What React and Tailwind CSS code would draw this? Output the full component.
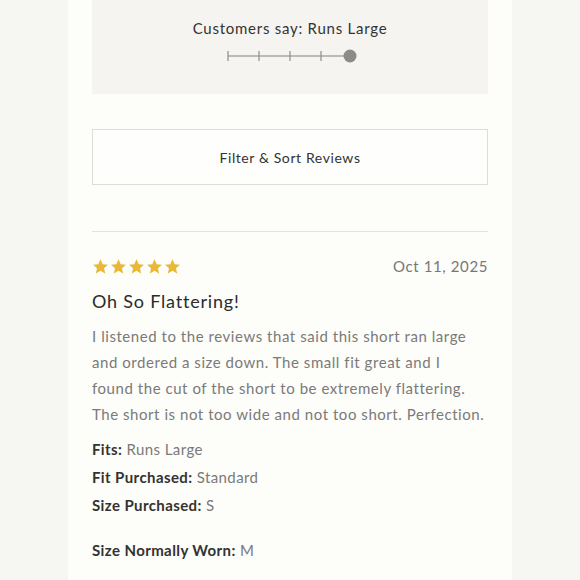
import React from "react";

function Stars() {
  return (
    <div className="flex gap-[1px]">
      {[0, 1, 2, 3, 4].map((i) => (
        <svg key={i} width="17" height="17" viewBox="0 0 24 24">
          <path
            d="M12 1.8l3.1 6.9 7.4.7-5.6 5 1.7 7.4L12 17.9l-6.6 3.9 1.7-7.4-5.6-5 7.4-.7z"
            fill="#e9b934"
          />
        </svg>
      ))}
    </div>
  );
}

function FitScale() {
  return (
    <svg width="140" height="16" viewBox="0 0 140 16">
      <line x1="2" y1="8" x2="128" y2="8" stroke="#a9a7a5" strokeWidth="1.5" />
      {[2, 33, 64, 95].map((x) => (
        <line key={x} x1={x} y1="3" x2={x} y2="13" stroke="#8f8d8b" strokeWidth="1.2" />
      ))}
      <circle cx="124" cy="8" r="6.5" fill="#8d8b8a" />
    </svg>
  );
}

const details = [
  { label: "Fits:", value: "Runs Large" },
  { label: "Fit Purchased:", value: "Standard" },
  { label: "Size Purchased:", value: "S" },
];

const bodyLines = [
  "I listened to the reviews that said this short ran large",
  "and ordered a size down. The small fit great and I",
  "found the cut of the short to be extremely flattering.",
  "The short is not too wide and not too short. Perfection.",
];

function App() {
  return (
    <div
      className="w-[580px] h-[580px] overflow-hidden bg-[#f6f6f2] flex justify-center"
      style={{ fontFamily: "Lato, 'Noto Sans', sans-serif" }}
    >
      <div className="w-[444px] h-full bg-[#fdfdf9] px-6">
        <div className="bg-[#f5f4f1] h-[94px] flex flex-col items-center pt-[17px]">
          <p className="text-[15px] text-[#333] tracking-[0.75px]">Customers say: Runs Large</p>
          <div className="mt-[8px] ml-[12px]">
            <FitScale />
          </div>
        </div>

        <button className="mt-[35px] w-full h-[56px] border border-[#dcdcda] bg-[#fefefc] text-[14px] text-[#333] tracking-[0.6px]">
          Filter &amp; Sort Reviews
        </button>

        <div className="mt-[46px] border-t border-[#e2e2df]" />

        <div className="mt-[23px] flex items-center justify-between">
          <Stars />
          <span className="text-[15px] text-[#777] tracking-[0.6px]">Oct 11, 2025</span>
        </div>

        <h2 className="mt-[10px] text-[18px] text-[#2b2b2b] tracking-[0.8px]">Oh So Flattering!</h2>

        <p className="mt-[8px] text-[15px] leading-[26px] text-[#7a7a7a] tracking-[0.55px]">
          {bodyLines.map((line) => (
            <span key={line} className="block whitespace-nowrap">
              {line}
            </span>
          ))}
        </p>

        <div className="mt-[11px] flex flex-col gap-[6px] text-[15px] leading-[22px] tracking-[0.4px]">
          {details.map((d) => (
            <p key={d.label}>
              <span className="font-bold text-[#333]">{d.label}</span>{" "}
              <span className="text-[#7a7a7a]">{d.value}</span>
            </p>
          ))}
          <p className="mt-[17px]">
            <span className="font-bold text-[#333]">Size Normally Worn:</span>{" "}
            <span className="text-[#7a7a7a]">M</span>
          </p>
        </div>
      </div>
    </div>
  );
}

export default App;
